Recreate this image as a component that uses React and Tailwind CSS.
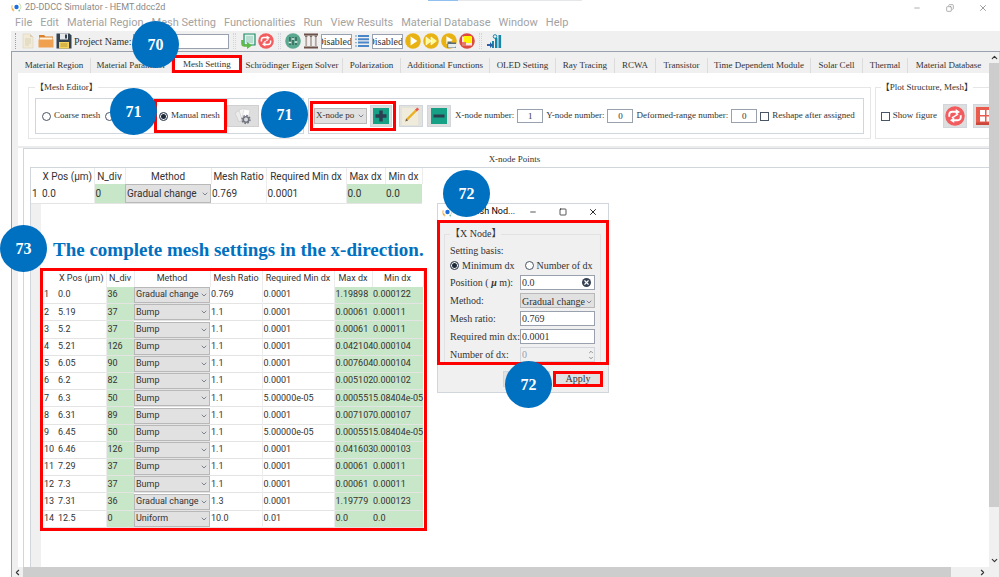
import React, { useState } from 'react';
import { ChevronDown, ChevronUp, ChevronLeft, ChevronRight, Minus, Square, Copy, X } from 'lucide-react';

const menuItems = [
  'File', 'Edit', 'Material Region', 'Mesh Setting', 'Functionalities',
  'Run', 'View Results', 'Material Database', 'Window', 'Help',
];

const tabs = [
  { name: 'Material Region', width: 'w-[73px]' },
  { name: 'Material Parameter', width: 'w-[81px]' },
  { name: 'Mesh Setting', width: 'w-[70px]' },
  { name: 'Schrödinger Eigen Solver', width: 'w-[101px]' },
  { name: 'Polarization', width: 'w-[58px]' },
  { name: 'Additional Functions', width: 'w-[89px]' },
  { name: 'OLED Setting', width: 'w-[66px]' },
  { name: 'Ray Tracing', width: 'w-[59px]' },
  { name: 'RCWA', width: 'w-[41px]' },
  { name: 'Transistor', width: 'w-[52px]' },
  { name: 'Time Dependent Module', width: 'w-[103px]' },
  { name: 'Solar Cell', width: 'w-[52px]' },
  { name: 'Thermal', width: 'w-[45px]' },
  { name: 'Material Database', width: 'w-[82px]' },
];

const headers = ['X Pos (μm)', 'N_div', 'Method', 'Mesh Ratio', 'Required Min dx', 'Max dx', 'Min dx'];

const firstRows = [['0.0', '0', 'Gradual change', '0.769', '0.0001', '0.0', '0.0']];

const fullRows = [
  ['0.0', '36', 'Gradual change', '0.769', '0.0001', '1.19898', '0.000122'],
  ['5.19', '37', 'Bump', '1.1', '0.0001', '0.00061', '0.00011'],
  ['5.2', '37', 'Bump', '1.1', '0.0001', '0.00061', '0.00011'],
  ['5.21', '126', 'Bump', '1.1', '0.0001', '0.042104', '0.000104'],
  ['6.05', '90', 'Bump', '1.1', '0.0001', '0.007604', '0.000104'],
  ['6.2', '82', 'Bump', '1.1', '0.0001', '0.005102', '0.000102'],
  ['6.3', '50', 'Bump', '1.1', '5.00000e-05', '0.000551', '5.08404e-05'],
  ['6.31', '89', 'Bump', '1.1', '0.0001', '0.007107', '0.000107'],
  ['6.45', '50', 'Bump', '1.1', '5.00000e-05', '0.000551', '5.08404e-05'],
  ['6.46', '126', 'Bump', '1.1', '0.0001', '0.041603', '0.000103'],
  ['7.29', '37', 'Bump', '1.1', '0.0001', '0.00061', '0.00011'],
  ['7.3', '37', 'Bump', '1.1', '0.0001', '0.00061', '0.00011'],
  ['7.31', '36', 'Gradual change', '1.3', '0.0001', '1.19779', '0.000123'],
  ['12.5', '0', 'Uniform', '10.0', '0.01', '0.0', '0.0'],
];

const AppIcon = () => (
  <svg viewBox="0 0 12 12" className="size-[11px] shrink-0">
    <circle cx="6" cy="5.5" r="2.4" fill="#1d6fe0" />
    <path d="M1.5 3.5A5.2 5.2 0 0 0 3.5 10" stroke="#f2c879" strokeWidth="1.4" fill="none" />
    <path d="M8.5 1.5A5 5 0 0 1 10 8" stroke="#cfe3b5" strokeWidth="1.2" fill="none" />
    <circle cx="2" cy="8" r="1" fill="#f0a93c" />
    <circle cx="9" cy="9.3" r="1" fill="#7cc4a0" />
  </svg>
);

const NewIcon = () => (
  <svg viewBox="0 0 16 16" className="size-4">
    <path d="M3 1h7l3 3v11H3z" fill="#f1ead6" stroke="#ddd3b8" strokeWidth="0.6" />
    <path d="M10 1v3h3" fill="#d9ceb0" />
    <path d="M5 6h6M5 8h6M5 10h6M5 12h4" stroke="#cfc5a8" strokeWidth="0.7" />
  </svg>
);

const OpenIcon = () => (
  <svg viewBox="0 0 16 16" className="size-4">
    <path d="M1 2h5l1.5 1.5H15V14H1z" fill="#d9822b" />
    <path d="M1.500 4.500h13V7h-13z" fill="#fff3df" />
    <path d="M0.500 6.500h15V14.500h-15z" fill="#f0a150" />
  </svg>
);

const SaveIcon = () => (
  <svg viewBox="0 0 16 16" className="size-4">
    <path d="M0.500 0.500h13l2 2v13h-15z" fill="#34414f" />
    <path d="M4 0.500h8v6H4z" fill="#e6e9ec" />
    <path d="M9 1.500h2v4H9z" fill="#34414f" />
    <path d="M3 9h10v6.500H3z" fill="#f5d25c" />
    <path d="M4.500 11h7M4.500 13h7" stroke="#a58b30" strokeWidth="0.8" />
  </svg>
);

const ReloadDocIcon = () => (
  <svg viewBox="0 0 16 16" className="size-4">
    <path d="M4 1h11v11H4z" fill="#dff2e9" stroke="#1f8a6b" strokeWidth="1.2" />
    <path d="M6 3h7v7H6z" fill="#b9ddd0" />
    <path d="M2.500 7v3.500a2 2 0 0 0 2 2H8" stroke="#5dbb46" strokeWidth="2.6" fill="none" />
    <path d="M7 9l5 3.500L7 16z" fill="#5dbb46" />
  </svg>
);

const RefreshIcon = ({ className }) => (
  <svg viewBox="0 0 16 16" className={className}>
    <circle cx="8" cy="8" r="7.8" fill="#f25c5e" />
    <path d="M3.4 8.600V7A2.400 2.400 0 0 1 5.800 4.600H9.500" stroke="#fff" strokeWidth="1.5" fill="none" />
    <path d="M8.600 2.400L12 4.700 8.600 7z" fill="#fff" />
    <path d="M12.600 7.400V9a2.400 2.400 0 0 1-2.400 2.400H6.500" stroke="#fff" strokeWidth="1.5" fill="none" />
    <path d="M7.400 9L4 11.300l3.400 2.300z" fill="#fff" />
    <path d="M5.500 9.500l5-3" stroke="#fff" strokeWidth="1" />
  </svg>
);

const SlidersIcon = () => (
  <svg viewBox="0 0 16 16" className="size-4">
    <circle cx="8" cy="8" r="7.8" fill="#5ba890" />
    <path d="M5 4v8M8 4v8M11 4v8" stroke="#24453d" strokeWidth="1" />
    <path d="M3.700 9.500h2.600M6.700 6h2.600M9.700 9h2.600" stroke="#e5f4ee" strokeWidth="1.5" />
  </svg>
);

const ColumnsIcon = () => (
  <svg viewBox="0 0 16 16" className="size-4">
    <path d="M1 1.500h14M1 14.500h14" stroke="#6b5148" strokeWidth="1.8" />
    <path d="M3.200 3v10.500M8 3v10.500M12.800 3v10.500" stroke="#b3a7a1" strokeWidth="1.8" />
    <path d="M2 3.200h2.400M6.800 3.200h2.400M11.600 3.200H14" stroke="#6b5148" strokeWidth="1" />
  </svg>
);

const ListIcon = () => (
  <svg viewBox="0 0 16 16" className="size-4">
    <path d="M4 3h11M4 6.300h11M4 9.600h11M4 13h11" stroke="#4b86c6" strokeWidth="2" />
    <path d="M1 3h2M1 6.300h2M1 9.600h2M1 13h2" stroke="#8fb6e0" strokeWidth="1.4" />
  </svg>
);

const PlayIcon = () => (
  <svg viewBox="0 0 16 16" className="size-4">
    <circle cx="8" cy="8" r="7.8" fill="#e9b213" />
    <path d="M5.600 3.600v8.800L12.400 8z" fill="#fff" />
  </svg>
);

const FastIcon = () => (
  <svg viewBox="0 0 16 16" className="size-4">
    <circle cx="8" cy="8" r="7.8" fill="#e9b213" />
    <path d="M3 4v8l5.400-4zM8 4v8l5.400-4z" fill="#ffff8c" stroke="#fff" strokeWidth="0.6" />
  </svg>
);

const PlayFolderIcon = () => (
  <svg viewBox="0 0 16 16" className="size-4">
    <circle cx="8" cy="8" r="7.8" fill="#e9b213" />
    <path d="M5.400 3.200v8L11.800 7z" fill="#fff" />
    <path d="M6.500 8.500h3l1 1H15V15H6.500z" fill="#5b6d74" />
    <path d="M7.200 11h8.300l-1 3.600H7.200z" fill="#e7eef0" />
  </svg>
);

const StopIcon = () => (
  <svg viewBox="0 0 16 16" className="size-4">
    <circle cx="8" cy="8" r="7.8" fill="#dc4a41" />
    <path d="M3 3.500h10v9H3z" fill="#fbe3df" />
    <path d="M5 3h7v7H5z" fill="#fff200" />
    <path d="M3 9h4v4H3z" fill="#e8796f" />
  </svg>
);

const ChartIcon = () => (
  <svg viewBox="0 0 16 16" className="size-4">
    <path d="M6 8h2v7H6zM9 5h2.400v10H9zM12.500 2h2.600v13h-2.600z" fill="#1787a8" />
    <circle cx="9" cy="3.5" r="1.8" fill="none" stroke="#1787a8" strokeWidth="1" />
    <path d="M1 11h3V9l3 3.200L4 15v-2H1z" fill="#2c5fa8" />
  </svg>
);

const CardsIcon = () => (
  <svg viewBox="0 0 20 20" className="size-5">
    <path d="M2 7l5-3 4 9-5 3z" fill="#ececec" stroke="#c4c4c4" strokeWidth="0.6" />
    <path d="M6 4l6-2 3 10-6 2z" fill="#f6f6f6" stroke="#c9c9c9" strokeWidth="0.6" />
    <path d="M11 3l6 1-2 9-6-1z" fill="#fdfdfd" stroke="#cfcfcf" strokeWidth="0.6" />
    <circle cx="13" cy="13.500" r="2.800" fill="none" stroke="#6f7480" strokeWidth="1.600" />
    <circle cx="13" cy="13.500" r="4" fill="none" stroke="#6f7480" strokeWidth="1.4" strokeDasharray="1.600 1.500" />
  </svg>
);

const PlusIcon = () => (
  <svg viewBox="0 0 16 16" className="size-4">
    <path d="M0 0h16v16H0z" fill="#16a085" />
    <path d="M8 2.500v11M2.500 8h11" stroke="#2c3e50" strokeWidth="3.4" />
  </svg>
);

const MinusIcon = () => (
  <svg viewBox="0 0 16 16" className="size-4">
    <path d="M0 0h16v16H0z" fill="#16a085" />
    <path d="M2.500 8h11" stroke="#2c3e50" strokeWidth="3" />
  </svg>
);

const PencilIcon = () => (
  <svg viewBox="0 0 20 20" className="size-5">
    <path d="M1 2h16v17H1z" fill="#f0ecdc" />
    <path d="M6 13.500L15.500 4" stroke="#e9b020" strokeWidth="2.4" />
    <path d="M15 4.500l2.200-2.200" stroke="#e85a4f" strokeWidth="2.6" />
    <path d="M4.300 15.400l.8-2.800 2 2z" fill="#7a5a38" />
  </svg>
);

const GridIcon = () => (
  <svg viewBox="0 0 20 20" className="size-5 shrink-0">
    <path d="M1 1h19v18H1z" fill="#e95b4c" />
    <path d="M1 16.500h19V19H1z" fill="#c9473b" />
    <path d="M5 4h5v5H5zM11.500 4h5v5h-5zM5 10.500h5v5H5zM11.500 10.500h5v5h-5z" fill="#fff" />
  </svg>
);

const Handle = () => <span className="mx-0.5 h-4 w-[3px] border-x border-dotted border-gray-300" />;

const ToolButton = ({ label, children }) => (
  <button aria-label={label} className="flex size-4 items-center justify-center">
    {children}
  </button>
);

const radioStyle =
  'size-[9px] shrink-0 appearance-none rounded-full border border-gray-600 bg-white checked:bg-gray-800 checked:shadow-[inset_0_0_0_1px_white]';

const Radio = ({ name, label, value, current, onChange }) => (
  <label className="flex items-center gap-[3px] whitespace-nowrap">
    <input
      type="radio"
      name={name}
      aria-label={label || value}
      checked={current === value}
      onChange={() => onChange(value)}
      className={radioStyle}
    />
    {label}
  </label>
);

const CheckBox = ({ label }) => (
  <label className="flex shrink-0 items-center gap-[3px] whitespace-nowrap">
    <input type="checkbox" className="size-[9px] appearance-none border border-gray-600 bg-white checked:bg-gray-700" />
    {label}
  </label>
);

// select with its own small arrow in the same grid cell
const Select = ({ id, label, value, options, className }) => (
  <div className={`grid items-center border border-[#b8b8b8] bg-[#e1e1e1] ${className}`}>
    <select
      id={id}
      aria-label={label}
      defaultValue={value}
      className="col-start-1 row-start-1 h-full w-full min-w-0 appearance-none pl-px pr-2"
    >
      {options.map((option) => (
        <option key={option}>{option}</option>
      ))}
    </select>
    <ChevronDown className="pointer-events-none col-start-1 row-start-1 mr-px size-2 justify-self-end text-gray-600" />
  </div>
);

const methods = ['Gradual change', 'Bump', 'Uniform'];

const MeshTable = ({ rows, columns, className, rowHeight, label }) => (
  <table aria-label={label} className={`table-fixed border-collapse bg-white text-[#333] ${className}`}>
    <colgroup>
      {columns.map((width, index) => (
        <col key={index} className={width} />
      ))}
    </colgroup>
    <thead>
      <tr className="h-4">
        <th aria-label="Row" />
        {headers.map((header) => (
          <th key={header} className="whitespace-nowrap border-r border-[#ececec] p-0 font-normal">
            {header}
          </th>
        ))}
      </tr>
    </thead>
    <tbody>
      {rows.map((row, index) => (
        <tr key={index} className="border-b border-[#e4e4e4]">
          <th className="p-0 pl-px text-left font-normal">{index + 1}</th>
          {row.map((cell, column) => {
            if (column === 2) {
              return (
                <td key={column} className="p-0">
                  <Select label={`Method ${index + 1}`} value={cell} options={methods} className={rowHeight} />
                </td>
              );
            }
            const green = column === 1 || column > 4;
            return (
              <td
                key={column}
                className={`whitespace-nowrap p-0 pl-px ${green ? 'bg-[#c8e6c8]' : 'border-r border-[#ececec]'}`}
              >
                {cell}
              </td>
            );
          })}
        </tr>
      ))}
    </tbody>
  </table>
);

const NumberField = ({ label, value }) => (
  <label className="flex shrink-0 items-center gap-[3px] whitespace-nowrap">
    {label}
    <input defaultValue={value} className="h-[14px] w-[26px] border border-gray-400 bg-white text-center" />
  </label>
);

const Badge = ({ number, className }) => (
  <div
    className={`absolute z-20 flex size-[47px] items-center justify-center rounded-full bg-[#0070c0] text-base font-bold text-white ${className}`}
  >
    {number}
  </div>
);

const MeshToolbar = () => {
  const [mesh, setMesh] = useState('Manual mesh');

  return (
    <div className="flex gap-1 overflow-hidden pl-[10px] pt-[7px]">
      <fieldset className="shrink-0 border border-[#e6e6e6] px-[6px] pb-1">
        <legend className="h-[14px] leading-[14px]">【Mesh Editor】</legend>
        <div className="mt-1 flex gap-1">
          <div className="flex h-9 w-[269px] items-center border border-gray-300 pl-[6px]">
            <div className="flex w-[63px]">
              <Radio name="mesh" label="Coarse mesh" value="Coarse mesh" current={mesh} onChange={setMesh} />
            </div>
            <div className="flex w-[49px]">
              <Radio name="mesh" value="Fine mesh" current={mesh} onChange={setMesh} />
            </div>
            <div className="flex h-[34px] w-[73px] items-center border-[3px] border-[#ff0000] pl-0.5">
              <Radio name="mesh" label="Manual mesh" value="Manual mesh" current={mesh} onChange={setMesh} />
            </div>
            <button aria-label="Mesh options" className="flex h-[22px] w-8 items-center justify-center border border-[#d0d0d0] bg-[#dedede]">
              <CardsIcon />
            </button>
          </div>
          <div className="flex h-9 items-center gap-[3px] border border-gray-300 pl-px pr-2">
            <div className="flex h-[30px] items-center gap-[3px] border-[3px] border-[#ff0000] px-px">
              <Select label="Node type" value="X-node po" options={['X-node po', 'Y-node po']} className="h-4 w-[53px]" />
              <button aria-label="Add node" className="flex size-[22px] items-center justify-center border border-gray-300 bg-[#dedede]">
                <PlusIcon />
              </button>
            </div>
            <button aria-label="Edit node" className="flex h-[22px] w-6 items-center justify-center border border-gray-300 bg-[#e4e2dc]">
              <PencilIcon />
            </button>
            <button aria-label="Remove node" className="mx-px flex h-[22px] w-6 items-center justify-center border border-gray-300 bg-[#dedede]">
              <MinusIcon />
            </button>
            <NumberField label="X-node number:" value="1" />
            <NumberField label="Y-node number:" value="0" />
            <NumberField label="Deformed-range number:" value="0" />
            <CheckBox label="Reshape after assigned" />
          </div>
        </div>
      </fieldset>
      <fieldset className="-mr-2 min-w-0 flex-1 border border-[#e6e6e6] pl-[5px]">
        <legend className="h-[14px] whitespace-nowrap leading-[14px]">【Plot Structure, Mesh】</legend>
        <div className="mt-1 flex h-9 items-center gap-[6px]">
          <CheckBox label="Show figure" />
          <button aria-label="Refresh figure" className="flex size-6 shrink-0 items-center justify-center border border-gray-300 bg-[#dedede]">
            <RefreshIcon className="size-5" />
          </button>
          <button aria-label="Grid" className="flex size-6 shrink-0 items-center justify-center border border-gray-300 bg-[#dedede]">
            <GridIcon />
          </button>
        </div>
      </fieldset>
    </div>
  );
};

const fieldStyle = 'h-[15px] w-full min-w-0 border border-gray-400 bg-white px-px';

const NodeDialog = () => {
  const [basis, setBasis] = useState('Minimum dx');

  return (
    <div
      role="dialog"
      aria-label="X-Mesh Node"
      className="absolute left-[437px] top-[203px] z-10 w-[172px] border border-gray-300 bg-[#f0f0f0] font-['Liberation_Serif','Noto_Sans_CJK_TC',serif] text-[10px] text-[#333]"
    >
      <div className="flex h-4 items-center bg-white pl-1 font-['Roboto',sans-serif] text-[9px] text-black">
        <AppIcon />
        <span className="ml-[6px] flex-1 whitespace-nowrap">X-Mesh Nod...</span>
        <button aria-label="Minimize" className="flex w-[30px] justify-center"><Minus className="size-2" /></button>
        <button aria-label="Maximize" className="flex w-[30px] justify-center"><Square className="size-2" /></button>
        <button aria-label="Close" className="flex w-[30px] justify-center"><X className="size-[10px]" /></button>
      </div>
      <div className="-mx-px border-[3px] border-[#ff0000] pl-1 pr-[5px] pt-[3px]">
        <fieldset className="border border-b-0 border-[#e2e2e2] pl-[5px] pr-[5px] pt-px">
          <legend className="h-4 leading-4">【X Node】</legend>
          <div className="leading-[15px]">Setting basis:</div>
          <div className="flex h-[15px] items-center gap-[10px]">
            <Radio name="basis" label="Minimum dx" value="Minimum dx" current={basis} onChange={setBasis} />
            <Radio name="basis" label="Number of dx" value="Number of dx" current={basis} onChange={setBasis} />
          </div>
          <div className="grid grid-cols-[70px_1fr] items-center gap-y-[3px] whitespace-nowrap pt-0.5">
            <label htmlFor="position">Position ( <b><i>μ</i></b> m):</label>
            <div className="grid items-center">
              <input id="position" defaultValue="0.0" className={`col-start-1 row-start-1 ${fieldStyle}`} />
              <button aria-label="Clear position" className="col-start-1 row-start-1 mr-1 flex size-[9px] items-center justify-center justify-self-end rounded-full bg-gray-700 text-white">
                <X className="size-[7px]" strokeWidth={4} />
              </button>
            </div>
            <label htmlFor="method">Method:</label>
            <Select id="method" value="Gradual change" options={methods} className="h-[15px]" />
            <label htmlFor="ratio">Mesh ratio:</label>
            <input id="ratio" defaultValue="0.769" className={fieldStyle} />
            <label htmlFor="mindx">Required min dx:</label>
            <input id="mindx" defaultValue="0.0001" className={fieldStyle} />
            <label htmlFor="numdx">Number of dx:</label>
            <div className="grid items-center">
              <input id="numdx" disabled defaultValue="0" className="col-start-1 row-start-1 h-[15px] w-full min-w-0 border border-gray-300 px-px text-gray-400" />
              <div className="pointer-events-none col-start-1 row-start-1 mr-px flex flex-col justify-self-end">
                <ChevronUp className="size-[6px]" />
                <ChevronDown className="size-[6px]" />
              </div>
            </div>
          </div>
        </fieldset>
      </div>
      <div className="flex h-[27px] items-center justify-end gap-[3px] pr-[5px]">
        <button className="h-4 w-[47px] border border-gray-300 bg-[#e1e1e1]" aria-label="Cancel" />
        <button className="h-4 w-[50px] border-[3px] border-[#ff0000] bg-[#e1e1e1] leading-[10px]">Apply</button>
      </div>
    </div>
  );
};

const App = () => (
  <div className="relative flex min-h-screen flex-col overflow-hidden bg-white pl-[11px] font-['Liberation_Serif','Noto_Sans_CJK_TC',serif] text-[10px] text-[#333]">
    <div className="absolute left-[428px] top-0 flex h-px w-[154px] bg-gray-200">
      <span className="w-[30px] bg-[#8fc0ee]" />
    </div>

    <header className="flex h-[15px] items-center gap-[3px] font-['Roboto',sans-serif] text-[9px] text-[#8a8a8a]">
      <AppIcon />
      <span className="flex-1 whitespace-nowrap">2D-DDCC Simulator - HEMT.ddcc2d</span>
      <button aria-label="Minimize" className="flex w-[30px] justify-center"><Minus className="size-2" /></button>
      <button aria-label="Restore" className="flex w-[30px] justify-center"><Copy className="size-2 -scale-x-100" /></button>
      <button aria-label="Close" className="mr-[2px] flex w-[30px] justify-center"><X className="size-[10px]" /></button>
    </header>

    <nav className="flex h-4 items-center gap-2 pl-1 font-['Roboto',sans-serif] text-[11px] text-[#a3a3a3]">
      {menuItems.map((item) => (
        <a key={item} href="#" className="whitespace-nowrap">{item}</a>
      ))}
    </nav>

    <div className="flex h-[21px] items-center gap-0.5 border-b border-gray-400 bg-[#f0f0f0] pl-1">
      <span className="h-4 w-[3px] border-l border-dotted border-gray-400" />
      <ToolButton label="New"><NewIcon /></ToolButton>
      <ToolButton label="Open"><OpenIcon /></ToolButton>
      <ToolButton label="Save"><SaveIcon /></ToolButton>
      <label className="flex items-center gap-0.5 whitespace-nowrap">
        Project Name:
        <input className="h-[15px] w-24 border border-gray-400 bg-white" />
      </label>
      <Handle />
      <ToolButton label="Reload structure"><ReloadDocIcon /></ToolButton>
      <ToolButton label="Refresh"><RefreshIcon className="size-4" /></ToolButton>
      <Handle />
      <ToolButton label="Parameters"><SlidersIcon /></ToolButton>
      <ToolButton label="Poisson solver"><ColumnsIcon /></ToolButton>
      <input aria-label="Solver state" readOnly value="Disabled" className="h-[15px] w-[31px] border border-gray-400 bg-white -indent-1.5" />
      <ToolButton label="Queue"><ListIcon /></ToolButton>
      <input aria-label="Queue state" readOnly value="Disabled" className="h-[15px] w-[31px] border border-gray-400 bg-white -indent-1.5" />
      <ToolButton label="Run"><PlayIcon /></ToolButton>
      <ToolButton label="Run all"><FastIcon /></ToolButton>
      <ToolButton label="Run from folder"><PlayFolderIcon /></ToolButton>
      <ToolButton label="Stop"><StopIcon /></ToolButton>
      <Handle />
      <ToolButton label="Results"><ChartIcon /></ToolButton>
    </div>

    <div className="flex flex-1 border-r border-gray-300">
      <div className="flex min-w-0 flex-1 flex-col border-l border-gray-400 text-[9px]">
        <div className="flex min-w-0 flex-1 flex-col border-l-[6px] border-[#f0f0f0]">
          <div role="tablist" className="flex h-[21px] items-end overflow-hidden bg-[#f0f0f0]">
            {tabs.map((tab) => (
              <button
                key={tab.name}
                role="tab"
                aria-selected={tab.name === 'Mesh Setting'}
                className={`shrink-0 whitespace-nowrap ${tab.width} ${
                  tab.name === 'Mesh Setting'
                    ? 'h-[18px] border-[3px] border-[#ff0000] bg-white leading-3'
                    : 'h-[15px] border-r border-[#dcdcdc] pb-px leading-3'
                }`}
              >
                {tab.name}
              </button>
            ))}
          </div>

          <MeshToolbar />

          <div className="mt-[7px] flex flex-1 flex-col border-t-2 border-[#ececec] pl-[5px]">
            <div className="flex flex-1 flex-col border-l border-t border-gray-300 pl-[6px]">
              <div className="h-[18px] pl-[10px] text-center leading-[20px]">X-node Points</div>
              <div className="flex flex-1 flex-col border-l border-t border-gray-300 font-['Roboto',sans-serif]">
                <MeshTable
                  label="X-node points"
                  rows={firstRows}
                  columns={['w-[10px]', 'w-[53px]', 'w-[31px]', 'w-[86px]', 'w-[55px]', 'w-[80px]', 'w-[39px]', 'w-[37px]']}
                  className="w-[391px] text-[10px]"
                  rowHeight="h-[19px]"
                />
                <div className="flex flex-1">
                  <div className="w-[10px] shrink-0 bg-[#f0f0f0]" />
                  <div>
                    <h1 className="mt-8 whitespace-nowrap pl-3 font-['Liberation_Serif',serif] text-[19px] font-bold leading-7 text-[#0070c0]">
                      The complete mesh settings in the x-direction.
                    </h1>
                    <div className="-ml-px mt-1 w-fit border-[3px] border-[#ff0000]">
                      <MeshTable
                        label="Complete mesh settings"
                        rows={fullRows}
                        columns={['w-[14px]', 'w-[49px]', 'w-[28px]', 'w-[76px]', 'w-[52px]', 'w-[72px]', 'w-[38px]', 'w-[51px]']}
                        className="h-[257px] w-[380px] text-[9px]"
                        rowHeight="h-4"
                      />
                    </div>
                  </div>
                </div>
              </div>
            </div>
          </div>
        </div>

        <div className="flex h-[10px] items-center bg-[#f0f0f0]">
          <ChevronLeft className="mx-px size-[9px]" strokeWidth={3} />
          <div className="h-full w-[95%] bg-[#cdcdcd]" />
          <ChevronRight className="ml-auto mr-0.5 size-[9px]" strokeWidth={3} />
        </div>
      </div>

      <div className="flex w-[10px] shrink-0 flex-col items-center bg-[#f0f0f0] pb-3">
        <ChevronUp className="my-px size-[9px] shrink-0" strokeWidth={3} />
        <div className="w-full flex-[9] bg-[#cdcdcd]" />
        <div className="flex-1" />
        <ChevronDown className="size-[9px] shrink-0" strokeWidth={3} />
      </div>
    </div>

    <NodeDialog />

    <Badge number="70" className="left-[132px] top-[21px]" />
    <Badge number="71" className="left-[110px] top-[88px]" />
    <Badge number="71" className="left-[261px] top-[91px]" />
    <Badge number="72" className="left-[443px] top-[170px]" />
    <Badge number="73" className="left-0 top-[225px]" />
    <Badge number="72" className="left-[505px] top-[361px]" />
  </div>
);

export default App;
